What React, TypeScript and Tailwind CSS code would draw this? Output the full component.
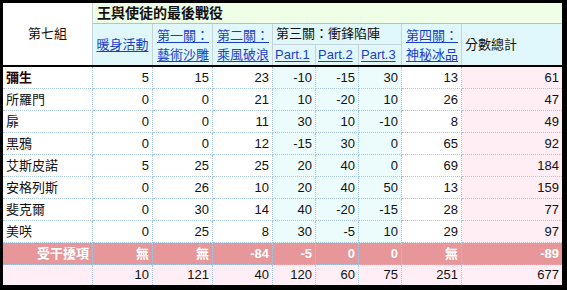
import React from 'react';

type Row = { name: string; vals: (number | string)[]; bold?: boolean };

const rows: Row[] = [
    { name: '彌生', vals: [5, 15, 23, -10, -15, 30, 13, 61], bold: true },
    { name: '所羅門', vals: [0, 0, 21, 10, -20, 10, 26, 47] },
    { name: '扉', vals: [0, 0, 11, 30, 10, -10, 8, 49] },
    { name: '黑鴉', vals: [0, 0, 12, -15, 30, 0, 65, 92] },
    { name: '艾斯皮諾', vals: [5, 25, 25, 20, 40, 0, 69, 184] },
    { name: '安格列斯', vals: [0, 26, 10, 20, 40, 50, 13, 159] },
    { name: '斐克爾', vals: [0, 30, 14, 40, -20, -15, 28, 77] },
    { name: '美咲', vals: [0, 25, 8, 30, -5, 10, 29, 97] },
];

const penalty = ['無', '無', -84, -5, 0, 0, '無', -89];
const totals = [10, 121, 40, 120, 60, 75, 251, 677];

// background per value column (c1..total)
const colBg = [
    'bg-white', 'bg-white', 'bg-white',
    'bg-[#ecfcfc]', 'bg-[#ecfcfc]', 'bg-[#ecfcfc]',
    'bg-white', 'bg-[#ffeef4]',
];

const dot = 'border-b border-dotted border-[#a9c6e2]';
const link = 'text-[#1a3ecc] underline underline-offset-2';

export default function App() {
    return (
        <div className="w-[567px] h-[290px] bg-black pl-[3px] pt-[3px] pr-[5px] pb-[5px]"
            style={{ fontFamily: '"Liberation Sans", "Noto Sans CJK TC", sans-serif' }}>
            <div className="grid grid-cols-[90px_60px_60px_60px_43px_43px_43px_60px_100px] grid-rows-[21px_21px_20px_2px_repeat(9,22px)_20px] text-[13px] leading-[18px] text-[#111]">
                {/* header */}
                <div className="row-span-3 flex items-center justify-center bg-white border-r border-[#c6d4d8]">第七組</div>
                <div className="col-span-8 flex items-center pl-1 bg-[#effee6] border-b border-[#b4c4b8] font-bold text-[14px]">王與使徒的最後戰役</div>

                <div className="row-span-2 flex items-center justify-center bg-[#e0f8fb] border-r border-[#c6d4d8]">
                    <span className={link}>暖身活動</span>
                </div>
                <div className="row-span-2 flex flex-col justify-center pl-1 bg-[#e0f8fb] border-r border-[#c6d4d8] leading-[19px]">
                    <span className={link}>第一關：</span>
                    <span className={link}>藝術沙雕</span>
                </div>
                <div className="row-span-2 flex flex-col justify-center pl-1 bg-[#e0f8fb] border-r border-[#c6d4d8] leading-[19px]">
                    <span className={link}>第二關：</span>
                    <span className={link}>乘風破浪</span>
                </div>
                <div className="col-span-3 flex items-center pl-[3px] bg-[#e0f8fb] border-r border-b border-[#c6d4d8]">第三關：衝鋒陷陣</div>
                <div className="row-span-2 flex flex-col justify-center pl-1 bg-[#e0f8fb] border-r border-[#c6d4d8] leading-[19px]">
                    <span className={link}>第四關：</span>
                    <span className={link}>神秘冰品</span>
                </div>
                <div className="row-span-2 flex items-center pl-[3px] bg-[#e0f8fb]">分數總計</div>

                <div className="flex items-center pl-[2px] bg-[#e0f8fb] border-r border-[#c6d4d8]"><span className={link}>Part.1</span></div>
                <div className="flex items-center pl-[2px] bg-[#e0f8fb] border-r border-[#c6d4d8]"><span className={link}>Part.2</span></div>
                <div className="flex items-center pl-[2px] bg-[#e0f8fb] border-r border-[#c6d4d8]"><span className={link}>Part.3</span></div>

                <div className="col-span-9 bg-black" />

                {/* body */}
                {rows.map((r) => (
                    <React.Fragment key={r.name}>
                        <div className={`flex items-center pl-[3px] bg-white border-r ${dot} ${r.bold ? 'font-bold text-[#2a0000]' : ''}`}>{r.name}</div>
                        {r.vals.map((v, i) => (
                            <div key={i} className={`flex items-center justify-end pr-[3px] ${colBg[i]} ${dot} ${i < 7 ? 'border-r' : ''}`}>{v}</div>
                        ))}
                    </React.Fragment>
                ))}

                {/* interference row */}
                <div className={`flex items-center justify-end pr-[3px] bg-[#e79799] text-white font-bold border-r ${dot}`}>受干擾項</div>
                {penalty.map((v, i) => (
                    <div key={i} className={`flex items-center justify-end pr-[3px] bg-[#e79799] text-white font-bold ${dot} ${i < 7 ? 'border-r' : ''}`}>{v}</div>
                ))}

                {/* totals */}
                <div className="bg-[#ffeef5] border-r border-dotted border-[#a9c6e2]" />
                {totals.map((v, i) => (
                    <div key={i} className={`flex items-center justify-end pr-[3px] bg-[#ffeef5] ${i < 7 ? 'border-r border-dotted border-[#a9c6e2]' : ''}`}>{v}</div>
                ))}
            </div>
        </div>
    );
}
